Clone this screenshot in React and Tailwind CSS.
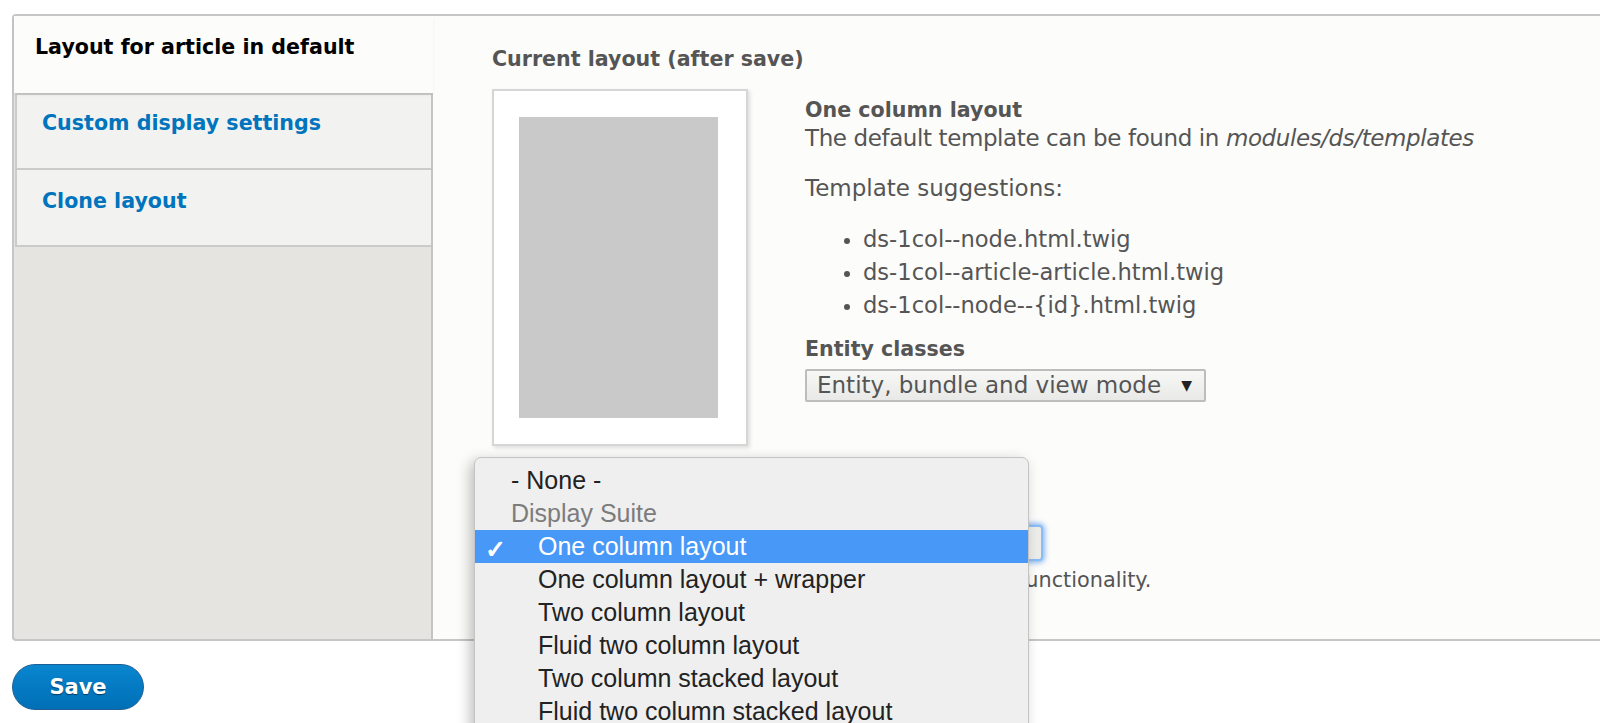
const page = { fontFamily: '"DejaVu Sans", "Liberation Sans", sans-serif' };
const menuFont = { fontFamily: '"Liberation Sans", Arial, sans-serif' };

const layouts = [
  'One column layout',
  'One column layout + wrapper',
  'Two column layout',
  'Fluid two column layout',
  'Two column stacked layout',
  'Fluid two column stacked layout',
  'Three column layout',
];

export default function App() {
  return (
    <div className="relative h-[723px] w-[1600px] overflow-hidden bg-white text-[#555]" style={page}>
      <div className="pt-[14px] pl-[12px]">
        {/* Vertical tabs */}
        <div className="flex h-[627px] rounded-l-[4px] border-y-2 border-l-2 border-[#c6c6c6] bg-[#e5e4e0]">
          <div className="flex w-[419px] shrink-0 flex-col border-r-2 border-[#c4c4c4]">
            <div className="relative z-10 -mr-[2px] h-[77px] bg-[#fcfcfa] px-[21px] pt-[18px] text-[20.6px] font-bold leading-[26px] text-black shadow-[0_2px_3px_rgba(0,0,0,0.06)]">
              Layout for article in default
            </div>
            <div className="ml-[1px] h-[77px] border-2 border-r-0 border-[#cbcbc9] bg-[#f2f2f0] pl-[25px] pt-[15px] text-[20.6px] font-bold leading-[26px] text-[#0074bd]">
              Custom display settings
            </div>
            <div className="ml-[1px] h-[77px] border-b-2 border-l-2 border-[#cbcbc9] bg-[#f2f2f0] pl-[25px] pt-[18px] text-[20.6px] font-bold leading-[26px] text-[#0074bd]">
              Clone layout
            </div>
          </div>

          {/* Panel */}
          <div className="flex-1 bg-[#fcfcfa] pl-[59px] pt-[30px]">
            <h2 className="text-[20.6px] font-bold leading-[26px]">Current layout (after save)</h2>
            <div className="mt-[17px] flex gap-[57px]">
              <div className="h-[357px] w-[256px] shrink-0 border-2 border-[#d6d6d6] bg-white pl-[25px] pt-[26px] shadow-[2px_2px_4px_rgba(0,0,0,0.12)]">
                <div className="h-[301px] w-[199px] bg-[#c9c9c9]" />
              </div>
              <div className="pt-[8px]">
                <div className="text-[20.6px] font-bold leading-[26px]">One column layout</div>
                <div className="mt-[1px] text-[23px] leading-[28px] tracking-[-0.4px]">
                  The default template can be found in <em>modules/ds/templates</em>
                </div>
                <div className="mt-[22px] text-[23px] leading-[28px]">Template suggestions:</div>
                <ul className="mt-[21px] list-disc pl-[58px] text-[22.6px] leading-[33px] marker:text-[20px]">
                  <li>ds-1col--node.html.twig</li>
                  <li>ds-1col--article-article.html.twig</li>
                  <li>ds-1col--node--{'{id}'}.html.twig</li>
                </ul>
                <div className="mt-[14px] text-[20.6px] font-bold leading-[26px]">Entity classes</div>
                <div className="mt-[7px] flex h-[33px] w-[401px] items-center justify-between rounded-[2px] border-2 border-[#bdbdbd] bg-gradient-to-b from-[#f7f7f5] to-[#e9e9e7] pl-[10px] pr-[12px] text-[23px]">
                  <span>Entity, bundle and view mode</span>
                  <span className="text-[14px] text-[#222]">▼</span>
                </div>
              </div>
            </div>
            <div className="mt-[79px] flex h-[36px] w-[551px] items-center justify-end rounded-[4px] border-2 border-[#8bbcf5] bg-[#ecece9] pr-[12px] shadow-[0_0_5px_2px_rgba(80,150,240,0.65)]">
              <span className="text-[14px] text-[#222]">▼</span>
            </div>
            <div className="mt-[5px] text-[20.8px] leading-[28px]">
              A layout must be selected to enable Display Suite functionality.
            </div>
          </div>
        </div>

        <button className="mt-[23px] h-[46px] w-[132px] rounded-full border border-[#1d5f94] bg-gradient-to-b from-[#0a86cf] to-[#006fb6] pt-[2px] text-[21px] font-bold text-white [text-shadow:0_1px_1px_rgba(0,0,0,0.5)]">
          Save
        </button>
      </div>

      {/* Native select popup */}
      <div
        className="absolute left-[474px] top-[457px] w-[555px] rounded-t-[7px] border border-[#c4c4c4] bg-[#efefef] pt-[6px] text-[25px] text-[#222] shadow-[-4px_4px_14px_rgba(0,0,0,0.25)]"
        style={menuFont}
      >
        <div className="flex h-[33px] items-center pl-[36px]">- None -</div>
        <div className="flex h-[33px] items-center pl-[36px] text-[#7c7c7c]">Display Suite</div>
        {layouts.map((l, i) => (
          <div
            key={l}
            className={
              i === 0
                ? 'relative flex h-[33px] items-center bg-[#4898f8] pl-[63px] text-white'
                : 'flex h-[33px] items-center pl-[63px]'
            }
          >
            {i === 0 && <span className="absolute left-[10px] top-[1px] text-[25px] font-bold">✓</span>}
            {l}
          </div>
        ))}
      </div>
    </div>
  );
}
